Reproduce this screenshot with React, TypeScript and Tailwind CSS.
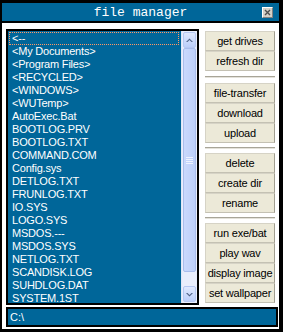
import React from 'react';

const files = [
  '<--',
  '<My Documents>',
  '<Program Files>',
  '<RECYCLED>',
  '<WINDOWS>',
  '<WUTemp>',
  'AutoExec.Bat',
  'BOOTLOG.PRV',
  'BOOTLOG.TXT',
  'COMMAND.COM',
  'Config.sys',
  'DETLOG.TXT',
  'FRUNLOG.TXT',
  'IO.SYS',
  'LOGO.SYS',
  'MSDOS.---',
  'MSDOS.SYS',
  'NETLOG.TXT',
  'SCANDISK.LOG',
  'SUHDLOG.DAT',
  'SYSTEM.1ST',
];

const groups = [
  ['get drives', 'refresh dir'],
  ['file-transfer', 'download', 'upload'],
  ['delete', 'create dir', 'rename'],
  ['run exe/bat', 'play wav', 'display image', 'set wallpaper'],
];

const sans = { fontFamily: '"Liberation Sans", Arial, sans-serif' };

function Arrow({ up }: { up?: boolean }) {
  return (
    <svg width="7" height="5" viewBox="0 0 7 5" className={up ? '' : 'rotate-180'}>
      <path d="M0 4 L3.5 0.5 L7 4 L5.5 4 L3.5 2 L1.5 4 Z" fill="#4d6185" />
    </svg>
  );
}

function ScrollBar() {
  return (
    <div className="w-[16px] h-full flex flex-col bg-[#e9eefc] border-l border-[#dfe6f8]">
      <div className="h-[16px] mt-[1px] mx-[1px] rounded-[2px] border border-[#b6c8f2] bg-gradient-to-b from-[#e0e9fe] to-[#bccffa] flex items-center justify-center">
        <Arrow up />
      </div>
      <div className="flex-1 flex flex-col">
        <div className="h-[224px] mx-[1px] rounded-[2px] border border-[#a9bdec] bg-gradient-to-r from-[#cad9fc] to-[#bccffa] flex flex-col items-center justify-center gap-[1px]">
          <div className="w-[7px] h-[1px] bg-[#eef3ff]" />
          <div className="w-[7px] h-[1px] bg-[#eef3ff]" />
          <div className="w-[7px] h-[1px] bg-[#eef3ff]" />
          <div className="w-[7px] h-[1px] bg-[#eef3ff]" />
        </div>
      </div>
      <div className="h-[16px] mb-[1px] mx-[1px] rounded-[2px] border border-[#b6c8f2] bg-gradient-to-b from-[#e0e9fe] to-[#bccffa] flex items-center justify-center">
        <Arrow />
      </div>
    </div>
  );
}

export default function App() {
  return (
    <div className="w-[283px] h-[332px] bg-black pt-[3px] pl-[2px] pr-[4px] pb-[3px] flex flex-col">
      {/* Title bar */}
      <div className="h-[18px] bg-[#006699] relative flex items-center justify-center">
        <span className="text-white text-[13px] leading-none" style={{ fontFamily: '"Liberation Mono", "Courier New", monospace' }}>
          file manager
        </span>
        <div className="absolute right-[6px] top-[4px] w-[11px] h-[11px] bg-[#d4d0c8] border border-[#808080] border-t-white border-l-white flex items-center justify-center">
          <svg width="7" height="7" viewBox="0 0 7 7">
            <path d="M1 1 L6 6 M6 1 L1 6" stroke="#505050" strokeWidth="1.4" />
          </svg>
        </div>
      </div>
      <div className="h-[2px] bg-black" />

      <div className="flex-1 bg-white flex flex-col px-[4px] pt-[6px] pb-[2px]">
        <div className="flex gap-[6px]">
          {/* File list */}
          <div className="w-[193px] h-[276px] border-2 border-black bg-[#006699] flex">
            <div className="flex-1 flex flex-col pt-[1px] pl-[1px] pr-[2px] overflow-hidden" style={sans}>
              {files.map((f, i) => (
                <div
                  key={f}
                  className={`h-[13px] shrink-0 pl-[3px] text-white text-[11px] leading-[13px] tracking-[-0.2px] whitespace-nowrap ${
                    i === 0 ? 'outline outline-1 outline-dotted outline-[#ff9966] -outline-offset-1' : ''
                  }`}
                >
                  {f}
                </div>
              ))}
            </div>
            <ScrollBar />
          </div>

          {/* Button column */}
          <div className="w-[70px] flex flex-col pt-[2px]" style={sans}>
            {groups.map((g, gi) => (
              <React.Fragment key={gi}>
                {gi > 0 && (
                  <div className={`flex flex-col justify-center ${gi === 1 ? 'h-[12px]' : 'h-[10px]'}`}>
                    <div className="h-[1px] bg-[#a8a598]" />
                    <div className="h-[1px] bg-[#e4e2da]" />
                  </div>
                )}
                {g.map(label => (
                  <button
                    key={label}
                    className="h-[20px] w-full bg-[#ece9d8] border border-[#d6d3c6] border-r-[#a19e90] border-b-[#c4c1b3] text-black text-[11px] tracking-[-0.2px] leading-none flex items-center justify-center whitespace-nowrap"
                  >
                    {label}
                  </button>
                ))}
              </React.Fragment>
            ))}
          </div>
        </div>

        {/* Path bar */}
        <div className="mt-[2px] w-[272px] h-[20px] border-2 border-black bg-[#006699] flex items-center pl-[2px] text-white text-[11px]" style={sans}>
          C:\
        </div>
      </div>
    </div>
  );
}
